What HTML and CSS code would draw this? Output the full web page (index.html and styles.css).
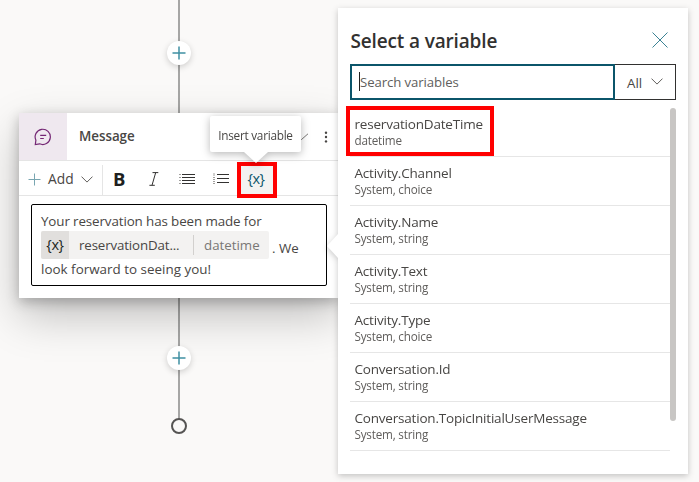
FILE: index.html
```html
<!DOCTYPE html>
<html lang="en">
<head>
<meta charset="utf-8">
<title>Select a variable</title>
<link rel="stylesheet" href="styles.css">
</head>
<body>
<main class="canvas">
  <div class="connector"></div>
  <div class="add-node add-top"><svg width="14" height="14" viewBox="0 0 14 14"><path d="M7 .5v13M.5 7h13"/></svg></div>
  <div class="add-node add-bottom"><svg width="14" height="14" viewBox="0 0 14 14"><path d="M7 .5v13M.5 7h13"/></svg></div>
  <div class="end-node"></div>

  <section class="card">
    <header class="card-head">
      <div class="card-icon">
        <svg width="18" height="18" viewBox="0 0 18 18"><path d="M1.3 16.6L1.9 12.2A7.6 7.6 0 1 1 5.6 15.8Z"/><path d="M6.2 7.4h6M6.2 10.5h3.6"/></svg>
      </div>
      <h2>Message</h2>
      <svg class="check" width="11" height="8" viewBox="0 0 11 8"><path d="M.5 3.5l3 3L10 .8"/></svg>
      <svg class="more" width="4" height="12" viewBox="0 0 4 12"><circle cx="2" cy="1.7" r="1.2"/><circle cx="2" cy="6" r="1.2"/><circle cx="2" cy="10.4" r="1.2"/></svg>
    </header>
    <div class="toolbar">
      <div class="add">
        <svg class="plus" width="13" height="13" viewBox="0 0 13 13"><path d="M6.5 .5v12M.5 6.5h12"/></svg>
        <span>Add</span>
        <svg class="chev" width="12" height="7" viewBox="0 0 12 7"><path d="M.5 .6L6 6.1 11.5 .6"/></svg>
      </div>
      <div class="tool bold">B</div>
      <svg class="italic" width="10" height="14" viewBox="0 0 10 14"><path d="M3.5 .6h5.8M.4 13.3h5.4M6.7 .6L3 13.3"/></svg>
      <svg class="bullets" width="18" height="12" viewBox="0 0 18 12"><path d="M4 1.5h13M4 4.5h13M4 7.5h13M4 10.5h13"/><path class="faint" d="M1 1.5h2M1 4.5h2M1 7.5h2M1 10.5h2"/></svg>
      <svg class="numbers" width="18" height="12" viewBox="0 0 18 12"><path d="M5 1.5h12M5 5.5h12M5 9.5h12"/><path class="faint" d="M2 0v3M1 4.5h2M1 6.5h2M1 8.5h2M1 10.5h2"/></svg>
      <div class="variable-tool">{x}</div>
    </div>
    <div class="editor">
      <p>Your reservation has been made for</p>
      <div class="chip-line">
        <span class="chip"><b>{x}</b><span class="chip-name">reservationDat...</span><i></i><span class="chip-type">datetime</span></span>
        <span class="we">. We</span>
      </div>
      <p class="last">look forward to seeing you!</p>
    </div>
    <div class="tooltip"><span>Insert variable</span></div>
  </section>

  <aside class="panel">
    <header class="panel-head">
      <h1>Select a variable</h1>
      <svg width="16" height="16" viewBox="0 0 16 16"><path d="M.5 .5l15 15M15.5 .5l-15 15"/></svg>
    </header>
    <div class="search">
      <div class="field"><span>Search variables</span></div>
      <div class="filter"><span>All</span><svg class="chev" width="12" height="7" viewBox="0 0 12 7"><path d="M.5 .6L6 6.1 11.5 .6"/></svg></div>
    </div>
    <div class="list">
      <ul>
        <li class="marked"><span>reservationDateTime</span><small>datetime</small></li>
        <li><span>Activity.Channel</span><small>System, choice</small></li>
        <li><span>Activity.Name</span><small>System, string</small></li>
        <li><span>Activity.Text</span><small>System, string</small></li>
        <li><span>Activity.Type</span><small>System, choice</small></li>
        <li><span>Conversation.Id</span><small>System, string</small></li>
        <li><span>Conversation.TopicInitialUserMessage</span><small>System, string</small></li>
      </ul>
      <div class="scrollbar"></div>
    </div>
  </aside>
</main>
</body>
</html>
```
FILE: styles.css
```css
*, *::before, *::after { box-sizing: border-box; }
body, h1, h2, p, ul { margin: 0; padding: 0; }
body {
  font-family: "Open Sans", "Noto Sans", sans-serif;
  font-size: 13px;
  color: #484644;
  background: #faf9f8;
}
svg { display: block; fill: none; stroke: #323130; stroke-width: 1; flex: none; }
.canvas { position: relative; width: 699px; height: 482px; overflow: hidden; }

.connector { position: absolute; left: 178px; top: 0; width: 2px; height: 419px; background: #a6a6a5; }
.add-node {
  position: absolute; left: 167px; width: 24px; height: 24px; border-radius: 50%;
  background: #fff; box-shadow: 0 2px 6px rgba(0,0,0,.18);
  display: grid; place-items: center;
}
.add-node svg { stroke: #3f90a3; stroke-width: 1.5; }
.add-top { top: 41px; }
.add-bottom { top: 346px; z-index: 1; }
.end-node { position: absolute; left: 171px; top: 418px; width: 16px; height: 16px; border: 2px solid #555453; border-radius: 50%; background: #faf9f8; }

.card {
  position: absolute; left: 19px; top: 113px; width: 320px; height: 185px; background: #fff;
  box-shadow: 0 18px 42px rgba(0,0,0,.23), 0 4px 12px rgba(0,0,0,.24);
}
.card-head { display: flex; align-items: center; height: 48px; border-bottom: 1px solid #e5e5e5; }
.card-icon { width: 48px; height: 47px; background: #efe8ef; display: grid; place-items: center; }
.card-icon svg { stroke: #742774; stroke-width: 1.2; }
.card-head h2 { margin-left: 12px; width: 56px; font-size: 13.4px; letter-spacing: -.05px; font-weight: 600; line-height: 18px; padding-bottom: 1px; color: #484644; }
.check { margin-left: 163px; }
.check path { stroke: #797775; }
.more { margin-left: 15px; }
.more circle { fill: #484644; stroke: none; }

.toolbar { display: flex; align-items: center; height: 35px; border-bottom: 1px solid #e5e5e5; }
.add { display: flex; align-items: center; width: 84px; height: 30px; margin-top: 3px; padding-left: 9px; border-right: 1px solid #e5e5e5; }
.plus { stroke: #79a6b1; }
.add span { margin-left: 7px; width: 33px; font-size: 13.8px; line-height: 18px; padding-bottom: 2px; }
.chev { stroke: #605e5c; }
.bold { width: 35px; padding-left: 10px; font-size: 18.5px; font-weight: 700; color: #201f1e; line-height: 24px; padding-top: 1px; }
.italic { margin-left: 11px; margin-top: 1px; }
.bullets { margin-left: 19px; margin-top: 2px; }
.numbers { margin-left: 16px; margin-top: 2px; }
.faint { stroke: #a19f9d; }
.variable-tool {
  width: 40px; height: 36px; margin: 0 0 -3px 7px; flex: none; border: 4px solid #f00; background: #f3f2f1;
  color: #0b556a; font-size: 14.5px; letter-spacing: -.5px; line-height: 26px; text-align: center; padding-right: 2px; position: relative; z-index: 1;
}

.editor { margin: 8px 12px 0; width: 296px; height: 82px; border: 1px solid #000; border-radius: 2px; padding: 7px 9px; }
.editor p { font-size: 13.4px; letter-spacing: -.12px; line-height: 18px; white-space: nowrap; }
.chip-line { display: flex; margin-top: 1px; height: 28px; }
.chip { display: flex; align-items: center; width: 228px; flex: none; height: 28px; border-radius: 2px; background: #f3f2f1; line-height: 28px; white-space: nowrap; }
.chip b { width: 28px; font-size: 14.5px; letter-spacing: -.4px; font-weight: 400; text-align: center; background: #e1dfdd; color: #201f1e; border-radius: 2px 0 0 2px; }
.chip-name { width: 124px; padding-left: 10px; font-size: 13.3px; letter-spacing: -.13px; }
.chip i { width: 1px; height: 20px; background: #d2d0ce; }
.chip-type { padding-left: 10px; font-size: 13.3px; color: #797775; }
.we { margin-left: 3px; line-height: 34px; font-size: 13.3px; white-space: nowrap; }
.editor .last { margin-top: 1px; letter-spacing: .02px; }

.tooltip {
  position: absolute; left: 191px; top: 3px; width: 91px; height: 36px; z-index: 2;
  border-radius: 2px; filter: drop-shadow(0 2px 4px rgba(0,0,0,.28));
  font-size: 11.8px; letter-spacing: -.27px; line-height: 38px; text-align: center; background: #fff; white-space: nowrap;
}
.tooltip::after { content: ""; position: absolute; left: 34px; top: 36px; border: solid transparent; border-width: 11px 12px 0; border-top-color: #fff; }

.panel {
  position: absolute; left: 338px; top: 8px; width: 350px; height: 466px; background: #fff; z-index: 3;
  padding: 0 12px; filter: drop-shadow(0 2px 3px rgba(0,0,0,.22));
}
.panel::before { content: ""; position: absolute; left: -11px; top: 226px; border: solid transparent; border-width: 12px 11px 12px 0; border-right-color: #fff; }
.panel-head { display: flex; align-items: center; justify-content: space-between; height: 56px; padding: 8px 8px 0 0; }
.panel-head h1 { font-size: 19px; letter-spacing: -.15px; font-weight: 600; line-height: 26px; padding: 1px 0 0 .5px; color: #323130; white-space: nowrap; }
.panel-head svg { stroke: #3b8294; }
.search { display: flex; height: 36px; }
.field { width: 265px; border: 2px solid #0b556a; padding: 6px 0 0 7px; }
.field span { display: block; border-left: 1px solid #201f1e; height: 19px; font-size: 13.2px; letter-spacing: -.1px; line-height: 21px; color: #605e5c; }
.filter { width: 61px; display: flex; align-items: center; border: 1px solid #323130; border-left: 0; padding-left: 12px; }
.filter span { width: 24px; font-size: 13.3px; line-height: 20px; padding-top: 2px; }
.filter svg { margin-top: -2px; }
.list { display: flex; margin-top: 8px; }
.list ul { width: 320px; list-style: none; }
.list li { height: 49px; padding: 7px 0 0 4.5px; border-bottom: 1px solid #e6e6e6; position: relative; }
.list li span { display: block; font-size: 13.5px; letter-spacing: -.2px; line-height: 19px; white-space: nowrap; color: #484644; }
.list small { display: block; font-size: 11.7px; letter-spacing: -.2px; line-height: 13px; color: #605e5c; }
.scrollbar { width: 6px; height: 313px; border-radius: 3px; background: #c8c6c4; }
.marked::after { content: ""; position: absolute; left: -4px; top: -2px; width: 148px; height: 50px; border: 4px solid #f00; }
```
